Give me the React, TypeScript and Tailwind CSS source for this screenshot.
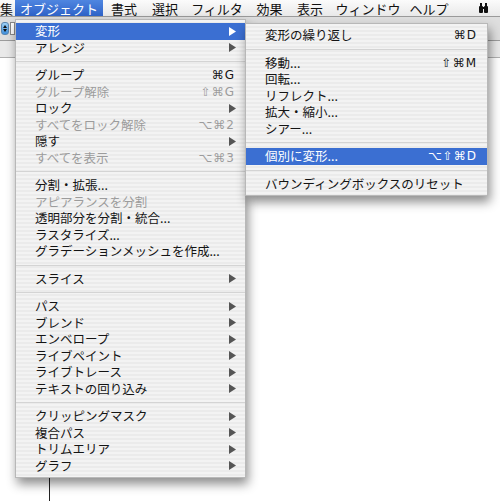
type Item = { label?: string; sc?: string; sub?: boolean; dis?: boolean; hi?: boolean; sep?: boolean };

const mainItems: Item[] = [
  { label: "変形", sub: true, hi: true },
  { label: "アレンジ", sub: true },
  { sep: true },
  { label: "グループ", sc: "⌘G" },
  { label: "グループ解除", sc: "⇧⌘G", dis: true },
  { label: "ロック", sub: true },
  { label: "すべてをロック解除", sc: "⌥⌘2", dis: true },
  { label: "隠す", sub: true },
  { label: "すべてを表示", sc: "⌥⌘3", dis: true },
  { sep: true },
  { label: "分割・拡張..." },
  { label: "アピアランスを分割", dis: true },
  { label: "透明部分を分割・統合..." },
  { label: "ラスタライズ..." },
  { label: "グラデーションメッシュを作成..." },
  { sep: true },
  { label: "スライス", sub: true },
  { sep: true },
  { label: "パス", sub: true },
  { label: "ブレンド", sub: true },
  { label: "エンベロープ", sub: true },
  { label: "ライブペイント", sub: true },
  { label: "ライブトレース", sub: true },
  { label: "テキストの回り込み", sub: true },
  { sep: true },
  { label: "クリッピングマスク", sub: true },
  { label: "複合パス", sub: true },
  { label: "トリムエリア", sub: true },
  { label: "グラフ", sub: true },
];

const subItems: Item[] = [
  { label: "変形の繰り返し", sc: "⌘D" },
  { sep: true },
  { label: "移動...", sc: "⇧⌘M" },
  { label: "回転..." },
  { label: "リフレクト..." },
  { label: "拡大・縮小..." },
  { label: "シアー..." },
  { sep: true },
  { label: "個別に変形...", sc: "⌥⇧⌘D", hi: true },
  { sep: true },
  { label: "バウンディングボックスのリセット" },
];

const menuBar = [
  { label: "集", w: "w-[15px]", align: "justify-start" },
  { label: "オブジェクト", w: "w-[88px]", hi: true },
  { label: "書式", w: "w-[42px]" },
  { label: "選択", w: "w-[40px]" },
  { label: "フィルタ", w: "w-[64px]" },
  { label: "効果", w: "w-[41px]" },
  { label: "表示", w: "w-[40px]" },
  { label: "ウィンドウ", w: "w-[76px]" },
  { label: "ヘルプ", w: "w-[46px]" },
];

function Arrow({ white }: { white?: boolean }) {
  return (
    <svg width="7" height="9" viewBox="0 0 7 9">
      <path d="M0 0 L7 4.5 L0 9 Z" fill={white ? "#ffffff" : "#555555"} />
    </svg>
  );
}

function Menu({ items, className }: { items: Item[]; className: string }) {
  return (
    <div
      className={`absolute py-[3px] bg-[repeating-linear-gradient(180deg,#f3f3f3_0px,#f3f3f3_2px,#ebebeb_2px,#ebebeb_4px)] border border-[#b8b8b8] shadow-[2px_6px_10px_rgba(0,0,0,0.45)] [font-family:'Noto_Sans_CJK_JP',sans-serif] ${className}`}
    >
      {items.map((it, i) =>
        it.sep ? (
          <div key={i} className="h-[11px] flex items-center">
            <div className="h-px w-full bg-[#d4d4d4]" />
          </div>
        ) : (
          <div
            key={i}
            className={`h-[16.5px] flex items-center pl-[19px] pr-[10px] text-[12.5px] leading-none ${
              it.hi ? "bg-[#3b6fd2] text-white" : it.dis ? "text-[#9c9c9c]" : "text-[#141414]"
            }`}
          >
            <span className="flex-1 whitespace-nowrap">{it.label}</span>
            {it.sc && (
              <span className="[font-family:'DejaVu_Sans',sans-serif] text-[12px] tracking-[1px]">{it.sc}</span>
            )}
            {it.sub && (
              <span className="mr-[-1px]">
                <Arrow white={it.hi} />
              </span>
            )}
          </div>
        )
      )}
    </div>
  );
}

export default function App() {
  return (
    <div className="relative w-[500px] h-[501px] overflow-hidden bg-white [font-family:'Noto_Sans_CJK_JP',sans-serif]">
      {/* menu bar */}
      <div className="h-[17px] flex items-stretch bg-[linear-gradient(#fbfbfb,#e9e9e9)] border-b border-[#9a9a9a] text-[13px] leading-none text-[#111]">
        {menuBar.map((m, i) => (
          <div
            key={i}
            className={`${m.w} flex items-center ${m.align ?? "justify-center"} whitespace-nowrap ${
              m.hi ? "bg-[linear-gradient(#4f86e0,#2f63c8)] text-white" : ""
            }`}
          >
            {m.label}
          </div>
        ))}
        <div className="flex-1 flex items-center justify-end pr-[12px]">
          <svg width="9" height="10" viewBox="0 0 9 10">
            <rect x="0" y="3" width="4" height="7" rx="1" fill="#111" />
            <rect x="5" y="3" width="4" height="7" rx="1" fill="#111" />
            <rect x="1" y="0" width="2" height="4" fill="#111" />
            <rect x="6" y="0" width="2" height="4" fill="#111" />
            <rect x="3" y="4" width="3" height="2" fill="#111" />
          </svg>
        </div>
      </div>

      {/* toolbar behind */}
      <div className="h-[24px] bg-[#dedede] border-b border-[#9c9c9c] flex items-center pl-[1px]">
        <div className="w-[8px] h-[13px] rounded-[3px] bg-[linear-gradient(#9fd0f5,#3f8fdc)] border border-[#5a86b0] flex flex-col items-center justify-center gap-[1px]">
          <span className="w-0 h-0 border-x-[2.5px] border-x-transparent border-b-[3px] border-b-[#111]" />
          <span className="w-0 h-0 border-x-[2.5px] border-x-transparent border-t-[3px] border-t-[#111]" />
        </div>
        <div className="ml-[1px] w-[5px] h-[13px] bg-white border border-[#888]" />
      </div>
      <div className="h-[17px] bg-[#e9e9e9] border-b border-[#b0b0b0]" />
      <div className="flex h-full">
        <div className="w-[49px]" />
        <div className="w-px h-full bg-[#222]" />
      </div>

      <Menu items={mainItems} className="left-[15px] top-[19px] w-[231px]" />
      <Menu items={subItems} className="left-[245px] top-[23px] w-[243px]" />
    </div>
  );
}
